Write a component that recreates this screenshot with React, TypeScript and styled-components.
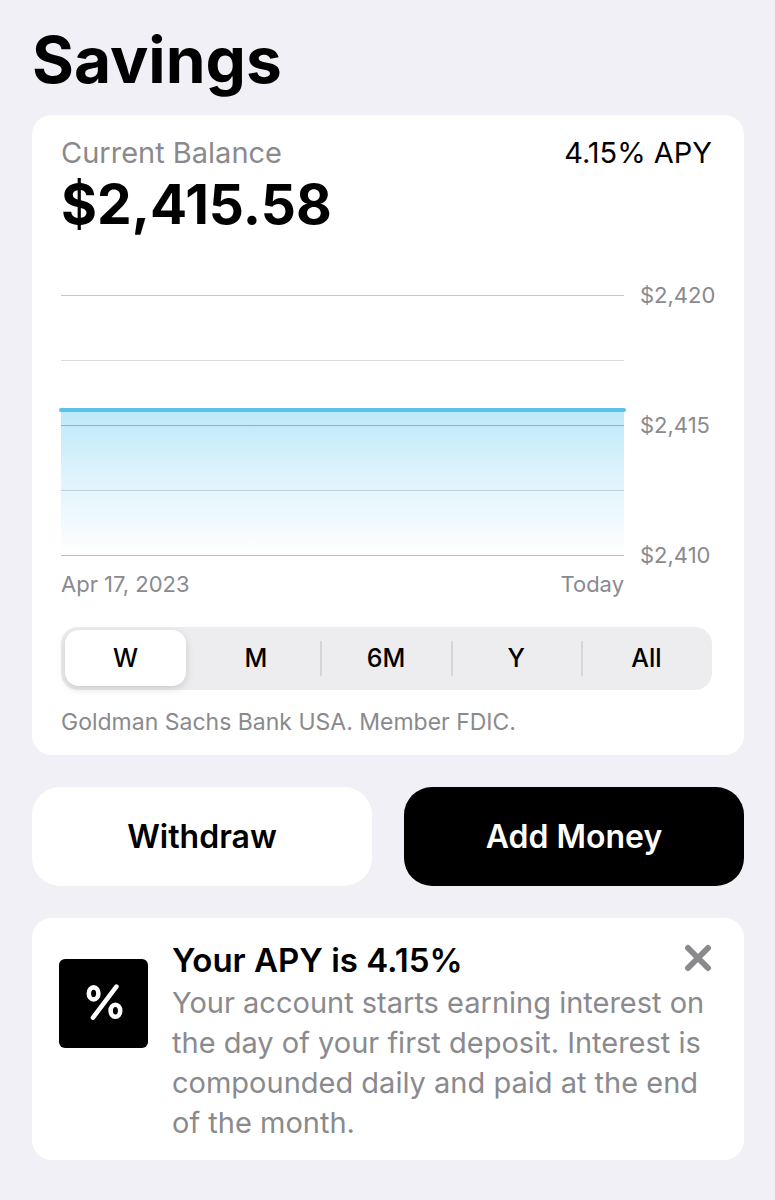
import React, { useState } from 'react';
import styled, { createGlobalStyle } from 'styled-components';

const GlobalStyle = createGlobalStyle`
  * { box-sizing: border-box; }
  body {
    margin: 0;
    background: #f1f0f6;
    color: #000;
    font-family: Inter, "Liberation Sans", sans-serif;
  }
  h1, h2, p { margin: 0; }
  button { font: inherit; color: inherit; border: 0; cursor: pointer; }
`;

const Page = styled.main`
  padding: 28px 31px 40px 32px;
`;

const Title = styled.h1`
  font-size: 64px;
  line-height: 64px;
  font-weight: 700;
  margin-bottom: 23px;
`;

const Card = styled.section`
  background: #fff;
  border-radius: 20px;
`;

const BalanceCard = styled(Card)`
  padding: 22px 32px 19px 29px;
`;

const BalanceHead = styled.div`
  display: flex;
  justify-content: space-between;
  font-size: 29px;
  line-height: 32px;
`;

const Muted = styled.span`
  color: #8a8a8e;
`;

const Amount = styled.p`
  font-size: 55px;
  line-height: 70px;
  font-weight: 700;
`;

const Chart = styled.div`
  display: grid;
  grid-template-columns: 1fr 72px;
  column-gap: 16px;
  margin-top: 43px;
`;

const Plot = styled.svg`
  display: block;
  width: 100%;
  height: 286px;
  overflow: visible;
`;

const Scale = styled.div`
  display: flex;
  flex-direction: column;
  justify-content: space-between;
  height: 286px;
  font-size: 22px;
  line-height: 26px;
  color: #8a8a8e;
`;

const Dates = styled.div`
  display: flex;
  justify-content: space-between;
  margin-top: 3px;
  font-size: 22px;
  line-height: 26px;
  color: #8a8a8e;
`;

const Segments = styled.div`
  display: grid;
  grid-template-columns: repeat(5, 1fr);
  height: 63px;
  margin-top: 30px;
  background: #ededef;
  border-radius: 17px;
`;

const Segment = styled.button<{ $active: boolean; $divided: boolean }>`
  position: relative;
  margin: 3px 5px 4px 4px;
  padding: 0;
  border-radius: 14px;
  font-size: 25px;
  line-height: 30px;
  font-weight: 500;
  background: ${p => (p.$active ? '#fff' : 'transparent')};
  box-shadow: ${p => (p.$active ? '0 3px 8px rgba(0, 0, 0, 0.14)' : 'none')};
  &::before {
    content: '';
    display: ${p => (p.$divided ? 'block' : 'none')};
    position: absolute;
    left: -5px;
    top: 11px;
    bottom: 10px;
    width: 2px;
    background: #d5d5d8;
  }
`;

const Notice = styled.p`
  margin-top: 18px;
  font-size: 23px;
  line-height: 28px;
  color: #8a8a8e;
`;

const Actions = styled.div`
  display: grid;
  grid-template-columns: 1fr 1fr;
  gap: 32px;
  margin: 32px 0;
`;

const Action = styled.button<{ $primary?: boolean }>`
  height: 99px;
  padding: 0;
  border-radius: 28px;
  font-size: 32px;
  line-height: 40px;
  font-weight: 600;
  background: ${p => (p.$primary ? '#000' : '#fff')};
  color: ${p => (p.$primary ? '#fff' : '#000')};
`;

const TipCard = styled(Card)`
  display: grid;
  grid-template-columns: 89px 1fr;
  column-gap: 24px;
  padding: 22px 32px 17px 27px;
`;

const Badge = styled.svg`
  display: block;
  width: 89px;
  height: 89px;
  margin-top: 19px;
`;

const TipHead = styled.div`
  display: flex;
  justify-content: space-between;
  align-items: flex-start;
`;

const TipTitle = styled.h2`
  font-size: 33px;
  line-height: 40px;
  font-weight: 600;
`;

const Close = styled.button`
  display: flex;
  padding: 4px 0;
  background: none;
`;

const TipText = styled.p`
  margin-top: 3px;
  font-size: 29px;
  line-height: 40px;
  color: #8a8a8e;
`;

const ranges = ['W', 'M', '6M', 'Y', 'All'];

export default function App() {
  const [range, setRange] = useState(0);
  return (
    <Page>
      <GlobalStyle />
      <Title>Savings</Title>
      <BalanceCard>
        <BalanceHead>
          <Muted>Current Balance</Muted>
          <span>4.15% APY</span>
        </BalanceHead>
        <Amount>$2,415.58</Amount>
        <Chart>
          <div>
            <Plot role="img" aria-label="Balance over time">
              <defs>
                <linearGradient id="fill" x1="0" y1="0" x2="0" y2="1">
                  <stop offset="0" stopColor="#bce9f8" />
                  <stop offset="0.5" stopColor="#e1f4fc" />
                  <stop offset="1" stopColor="#ffffff" />
                </linearGradient>
              </defs>
              <rect x="0" y="128" width="100%" height="145" fill="url(#fill)" />
              <g fill="#000">
                <rect y="13" width="100%" height="1" opacity="0.22" />
                <rect y="78" width="100%" height="1" opacity="0.14" />
                <rect y="143" width="100%" height="1" opacity="0.25" />
                <rect y="208" width="100%" height="1" opacity="0.15" />
                <rect y="273" width="100%" height="1" opacity="0.25" />
              </g>
              <line x1="0" y1="128" x2="100%" y2="128" stroke="#5bc1e8" strokeWidth="4" strokeLinecap="round" />
            </Plot>
            <Dates>
              <span>Apr 17, 2023</span>
              <span>Today</span>
            </Dates>
          </div>
          <Scale>
            <span>$2,420</span>
            <span>$2,415</span>
            <span>$2,410</span>
          </Scale>
        </Chart>
        <Segments role="group" aria-label="Range">
          {ranges.map((label, i) => (
            <Segment
              key={label}
              type="button"
              aria-pressed={range === i}
              $active={range === i}
              $divided={i > 0 && range !== i && range !== i - 1}
              onClick={() => setRange(i)}
            >
              {label}
            </Segment>
          ))}
        </Segments>
        <Notice>Goldman Sachs Bank USA. Member FDIC.</Notice>
      </BalanceCard>
      <Actions>
        <Action type="button">Withdraw</Action>
        <Action type="button" $primary>Add Money</Action>
      </Actions>
      <TipCard>
        <Badge viewBox="0 0 89 89" aria-hidden="true">
          <rect width="89" height="89" rx="6" />
          <g fill="none" stroke="#fff" strokeWidth="4.6" strokeLinecap="round">
            <ellipse cx="34.6" cy="34.4" rx="4.8" ry="6" />
            <ellipse cx="56.4" cy="51.8" rx="4.8" ry="6" />
            <path d="M57.4 27.6 34 58.6" />
          </g>
        </Badge>
        <div>
          <TipHead>
            <TipTitle>Your APY is 4.15%</TipTitle>
            <Close type="button" aria-label="Dismiss">
              <svg width="28" height="28" viewBox="0 0 28 28" fill="none" stroke="#8a8a8e" strokeWidth="6" strokeLinecap="round">
                <path d="M4 4 24 24M24 4 4 24" />
              </svg>
            </Close>
          </TipHead>
          <TipText>
            Your account starts earning interest on the day of your first deposit. Interest is
            compounded daily and paid at the end of the month.
          </TipText>
        </div>
      </TipCard>
    </Page>
  );
}
